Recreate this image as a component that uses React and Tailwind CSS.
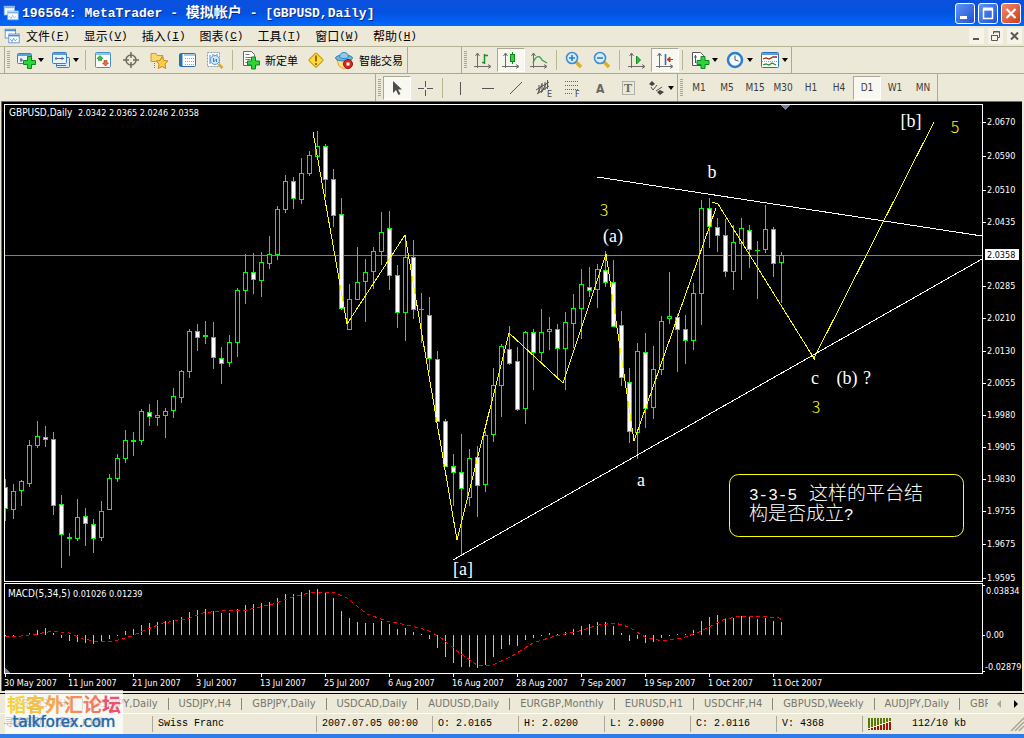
import React from 'react'

// [high, open/close top, open/close bottom, low, filled]
const CANDLES = [
  [479, 487, 509, 521, 1], [484, 491, 510, 519, 0], [480, 481, 491, 506, 0], [440, 445, 484, 487, 0],
  [421, 436, 446, 448, 0], [426, 437, 440, 447, 1], [432, 439, 506, 515, 1], [495, 504, 535, 568, 1],
  [533, 537, 539, 556, 0], [499, 517, 539, 541, 0], [508, 516, 524, 546, 1], [519, 524, 539, 553, 1],
  [501, 511, 538, 541, 0], [474, 478, 510, 510, 0], [454, 458, 479, 482, 0], [430, 440, 459, 463, 0],
  [432, 440, 442, 456, 0], [409, 411, 441, 445, 0], [404, 412, 417, 426, 1], [400, 415, 418, 426, 0],
  [408, 411, 416, 438, 0], [388, 396, 411, 418, 0], [370, 371, 398, 403, 0], [329, 331, 372, 378, 0],
  [324, 331, 338, 351, 1], [321, 335, 337, 344, 0], [322, 337, 358, 369, 1], [347, 358, 364, 384, 1],
  [335, 342, 363, 367, 0], [288, 290, 343, 357, 0], [254, 272, 291, 304, 0], [253, 272, 280, 294, 1],
  [252, 262, 281, 297, 0], [236, 254, 264, 269, 0], [206, 209, 255, 260, 0], [175, 181, 210, 213, 0],
  [177, 181, 199, 209, 1], [158, 173, 200, 204, 0], [151, 155, 174, 176, 0], [131, 146, 157, 159, 0],
  [144, 146, 180, 197, 1], [169, 179, 216, 227, 1], [198, 214, 309, 310, 1], [284, 299, 330, 330, 0],
  [247, 282, 300, 300, 0], [259, 272, 282, 322, 0], [247, 251, 272, 289, 0], [212, 232, 252, 265, 0],
  [211, 228, 276, 290, 1], [265, 275, 313, 328, 1], [235, 257, 313, 341, 0], [240, 257, 310, 319, 1],
  [293, 309, 310, 343, 0], [297, 315, 359, 372, 1], [351, 359, 422, 422, 1], [419, 421, 467, 467, 1],
  [454, 466, 473, 506, 1], [434, 472, 489, 555, 1], [449, 458, 498, 506, 0], [446, 457, 486, 517, 1],
  [431, 435, 485, 492, 0], [368, 385, 435, 442, 0], [344, 346, 386, 417, 0], [326, 349, 364, 365, 1],
  [347, 361, 410, 411, 1], [331, 332, 409, 424, 0], [329, 332, 353, 390, 1], [309, 332, 353, 361, 0],
  [317, 329, 332, 350, 0], [324, 329, 349, 378, 1], [312, 322, 349, 390, 0], [294, 308, 324, 348, 0],
  [269, 284, 309, 339, 0], [267, 287, 291, 297, 1], [264, 269, 290, 308, 0], [251, 270, 283, 287, 1],
  [260, 282, 327, 327, 1], [311, 325, 378, 386, 1], [368, 382, 432, 443, 1], [343, 351, 433, 459, 0],
  [333, 352, 409, 428, 1], [346, 369, 408, 419, 0], [316, 321, 370, 375, 0], [272, 316, 319, 324, 0],
  [314, 317, 330, 372, 1], [315, 329, 341, 364, 1], [283, 293, 341, 350, 0], [200, 208, 294, 325, 0],
  [198, 208, 227, 248, 1], [218, 227, 236, 252, 1], [219, 235, 272, 277, 1], [225, 242, 272, 290, 0],
  [218, 228, 244, 280, 0], [225, 230, 250, 268, 1], [241, 250, 251, 299, 0], [205, 229, 250, 253, 0],
  [227, 229, 264, 277, 1], [252, 255, 263, 303, 0],
]

const MACD = [
  637, 636, 636, 633, 630, 628, 633, 638, 641, 642, 643, 644, 642, 639, 635, 631, 629, 625, 623, 622,
  621, 620, 617, 612, 610, 609, 611, 613, 613, 609, 605, 604, 603, 602, 598, 594, 594, 592, 590, 589,
  593, 598, 611, 618, 622, 623, 623, 621, 624, 629, 628, 632, 634, 639, 648, 657, 663, 667, 667, 668,
  665, 657, 649, 645, 646, 640, 638, 636, 633, 634, 632, 629, 626, 624, 622, 622, 626, 633, 641, 639,
  643, 642, 638, 636, 634, 634, 630, 621, 617, 615, 618, 618, 616, 617, 619, 618, 621, 622,
]

const SIGNAL =
  '5,636 21,636 37,634 53,631 69,633 83,639 100,642 115,641 132,636 143,631 163,623 187,619 203,613 227,610 247,610 273,604 293,597 313,592 333,592 347,598 367,614 387,621 407,625 427,630 440,637 457,651 477,665 493,665 510,657 517,653 533,643 555,636 579,631 599,625 615,623 629,627 645,637 662,641 682,638 699,632 725,619 742,616 759,616 779,618 782,620'

const PRICES = [
  [122, '2.0670'], [156, '2.0590'], [190, '2.0510'], [222, '2.0435'], [286, '2.0285'], [318, '2.0210'],
  [351, '2.0130'], [383, '2.0055'], [415, '1.9980'], [447, '1.9905'], [479, '1.9830'], [511, '1.9755'],
  [544, '1.9675'], [578, '1.9595'],
]

const DATES = [
  '30 May 2007', '11 Jun 2007', '21 Jun 2007', '3 Jul 2007', '13 Jul 2007', '25 Jul 2007', '6 Aug 2007',
  '16 Aug 2007', '28 Aug 2007', '7 Sep 2007', '19 Sep 2007', '1 Oct 2007', '11 Oct 2007',
]

const MENUS = [
  ['文件', 'F'], ['显示', 'V'], ['插入', 'I'], ['图表', 'C'], ['工具', 'T'], ['窗口', 'W'], ['帮助', 'H'],
]

const TABS = [
  'GBPUSD,H1', 'USDJPY,Daily', 'USDJPY,H4', 'GBPJPY,Daily', 'USDCAD,Daily', 'AUDUSD,Daily',
  'EURGBP,Monthly', 'EURUSD,H1', 'USDCHF,H4', 'GBPUSD,Weekly', 'AUDJPY,Daily',
]

const Svg = ({ children, size = 'h-5 w-5' }) => (
  <svg viewBox="0 0 20 20" className={`shrink-0 ${size}`} fill="none" aria-hidden="true">
    {children}
  </svg>
)

const Plus = ({ x, y }) => (
  <path
    transform={`translate(${x} ${y})`}
    d="M4 0h4v4h4v4H8v4H4V8H0V4h4z"
    fill="#2fd43b"
    stroke="#0a8a1c"
  />
)

const Axes = () => (
  <path d="M4.500 4v14M1 16.500h16M2.500 6l2-3 2 3M15 14.500l3 2-3 2" stroke="#6b6b6b" />
)

const Windows = ({ color = '#4a8ad4' }) => (
  <>
    <rect x="1.500" y="1.500" width="13" height="11" fill="#fff" stroke={color} />
    <path d="M1 3h14" stroke={color} strokeWidth="2" />
    <rect x="6" y="7.500" width="13" height="11" fill="#fff" stroke={color} />
    <path d="M6 9.500h13" stroke={color} strokeWidth="2" />
    <path d="M8 14l2 3 2-4 2 3 2-2" stroke={color} />
  </>
)

const icons = {
  newChart: (
    <Svg>
      <rect x="1.500" y="3.500" width="14" height="10" rx="1" fill="#eaf4ff" stroke="#3b7fc4" />
      <path d="M2 5h13" stroke="#5aa0e0" strokeWidth="2" />
      <path d="M4 10h3M5 8v4" stroke="#557" />
      <Plus x={7.5} y={6.5} />
    </Svg>
  ),
  profiles: (
    <Svg>
      <rect x="5.500" y="7.500" width="13" height="10" rx="1" fill="#dcecfb" stroke="#3b7fc4" />
      <rect x="1.500" y="2.500" width="14" height="11" rx="1" fill="#eaf4ff" stroke="#3b7fc4" />
      <path d="M2 4h13" stroke="#5aa0e0" strokeWidth="2" />
      <path d="M4 8.500h9M5 7v3M11 7v3M5 15.500h10" stroke="#668" />
    </Svg>
  ),
  marketWatch: (
    <Svg>
      <rect x="2.500" y="2.500" width="15" height="15" rx="1" fill="#fff" stroke="#4a90c8" />
      <path d="M3 4h14" stroke="#8cc4ea" strokeWidth="2" />
      <path d="M7 5.500l3 3H8.500v2h-3v-2H4z" fill="#2cc23a" stroke="#138a20" strokeWidth=".6" />
      <path d="M12.500 16l-3-3h1.500v-2.500h3V13h1.500z" fill="#f4653f" stroke="#b52c12" strokeWidth=".6" />
    </Svg>
  ),
  crosshairWindow: (
    <Svg>
      <circle cx="10" cy="10" r="5" stroke="#6c6c60" strokeWidth="1.500" />
      <path d="M10 2v6M10 12v6M2 10h6M12 10h6" stroke="#6c6c60" strokeWidth="1.500" />
    </Svg>
  ),
  navigator: (
    <Svg>
      <path d="M2 3.500h5l1 2h6v6H2z" fill="#fbd774" stroke="#cf9a2a" />
      <path d="M5.500 13v5" stroke="#777" strokeDasharray="1 1" />
      <path d="M13 6.500l2 4 4 .5-3 3 .8 4.500-3.800-2-3.800 2 .8-4.500-3-3 4-.5z" fill="#ffcb4a" stroke="#c98a1a" />
    </Svg>
  ),
  terminal: (
    <Svg>
      <rect x="2.500" y="3.500" width="16" height="13" rx="1" fill="#fff" stroke="#2f6fb8" />
      <path d="M4 4v12" stroke="#2f6fb8" strokeWidth="3" />
      <path d="M7 5h11" stroke="#9acbf0" strokeWidth="2" />
      <path d="M8 8.500h9M8 11.500h9M8 14.500h9" stroke="#9aa" strokeDasharray="1 1" />
    </Svg>
  ),
  tester: (
    <Svg>
      <rect x="2.500" y="2.500" width="12" height="14" fill="#fff" stroke="#999" strokeDasharray="2 1" />
      <path d="M5 5v9M8 4v3M12 4v3" stroke="#4a8ad4" />
      <circle cx="10" cy="10" r="4.500" fill="#cfe8fb" stroke="#5a9fd6" />
      <path d="M8.500 8v4l3-3v3" stroke="#3b7fc4" />
      <path d="M13.500 14l4 4" stroke="#d9a52c" strokeWidth="2.500" />
    </Svg>
  ),
  newOrder: (
    <Svg>
      <path d="M3.500 1.500h8l3 3v11h-11z" fill="#fff" stroke="#666" />
      <path d="M5.500 4.500h4M5.500 7.500h7M5.500 9.500h5M5.500 12.500h3" stroke="#777" />
      <Plus x={7.5} y={7} />
    </Svg>
  ),
  alert: (
    <Svg>
      <rect x="4.800" y="4.800" width="10.500" height="10.500" rx="1" transform="rotate(45 10 10)" fill="#ffd83a" stroke="#c39a12" />
      <path d="M10 5.500v6M10 13v2" stroke="#7a5a00" strokeWidth="1.600" />
    </Svg>
  ),
  expert: (
    <Svg>
      <path d="M3 10l2 6 5 3 6-3 1-6z" fill="#ffdf80" stroke="#d6a536" />
      <ellipse cx="10" cy="8" rx="8.500" ry="3" fill="#6cb6e6" stroke="#2f7fb8" />
      <path d="M5.500 7c0-6 9-6 9 0-2 2-7 2-9 0z" fill="#8fccf2" stroke="#2f7fb8" />
      <circle cx="14" cy="14" r="4.500" fill="#d8281a" stroke="#951208" />
      <rect x="12.500" y="12.500" width="3" height="3" fill="#fff" />
    </Svg>
  ),
  bars: (
    <Svg>
      <Axes />
      <path d="M11.500 4v10M9 12.500h2M12 5.500h3" stroke="#1d8f2a" strokeWidth="1.500" />
    </Svg>
  ),
  candles: (
    <Svg>
      <Axes />
      <path d="M11.500 2v12" stroke="#138a20" />
      <rect x="9.500" y="4.500" width="4" height="7" fill="#2fd43b" stroke="#138a20" />
    </Svg>
  ),
  line: (
    <Svg>
      <Axes />
      <path d="M4 13c3-8 7-8 9-3l5 3" stroke="#3aa046" strokeWidth="1.300" />
    </Svg>
  ),
  zoomIn: (
    <Svg>
      <path d="M12 12l5 5" stroke="#d9b02c" strokeWidth="3.500" />
      <circle cx="8" cy="8" r="5.500" fill="#d5ecfb" stroke="#3d8fce" strokeWidth="1.600" />
      <path d="M5 8h6M8 5v6" stroke="#2f7fc0" strokeWidth="1.600" />
    </Svg>
  ),
  zoomOut: (
    <Svg>
      <path d="M12 12l5 5" stroke="#d9b02c" strokeWidth="3.500" />
      <circle cx="8" cy="8" r="5.500" fill="#d5ecfb" stroke="#3d8fce" strokeWidth="1.600" />
      <path d="M5 8h6" stroke="#2f7fc0" strokeWidth="1.600" />
    </Svg>
  ),
  autoScroll: (
    <Svg>
      <Axes />
      <path d="M9.500 6l4 4-4 4z" fill="#2cc23a" stroke="#138a20" />
    </Svg>
  ),
  chartShift: (
    <Svg>
      <Axes />
      <path d="M10.500 4v11" stroke="#2f6fb8" strokeWidth="1.600" />
      <path d="M12 9.500h6M15 7l-3 2.500 3 2.500z" stroke="#c23a12" fill="#c23a12" />
    </Svg>
  ),
  indicators: (
    <Svg>
      <path d="M2.500 2.500h8l3 3v10h-11z" fill="#fff" stroke="#555" />
      <path d="M5.500 5v8M4 7h3" stroke="#555" />
      <Plus x={7} y={6.5} />
    </Svg>
  ),
  periods: (
    <Svg>
      <circle cx="10" cy="10" r="7" fill="#f4f9ff" stroke="#2c7fd0" strokeWidth="2.500" />
      <path d="M10 5.500V10l3.500 1" stroke="#555" />
    </Svg>
  ),
  templates: (
    <Svg>
      <rect x="1.500" y="2.500" width="17" height="15" rx="1" fill="#fff" stroke="#2f6fb8" />
      <path d="M2 4h16" stroke="#5aa0e0" strokeWidth="2" />
      <path d="M3 9l3-1 3 1 4-2h4" stroke="#a02818" strokeWidth="1.300" />
      <path d="M2 11.500h16" stroke="#7ab" strokeDasharray="1 1" />
      <path d="M3 15l3-1 3 1 3-2 4 2" stroke="#1d8f2a" strokeWidth="1.300" />
    </Svg>
  ),
  cursor: (
    <Svg>
      <path d="M6 3v12l3-3 2.500 5 2-1-2.500-4.500h4z" fill="#4c4c4c" />
    </Svg>
  ),
  cross: (
    <Svg>
      <path d="M10.500 3v6M10.500 12v6M3 10.500h6M12 10.500h6" stroke="#555" />
    </Svg>
  ),
  vline: <Svg><path d="M10.500 4v13" stroke="#555" /></Svg>,
  hline: <Svg><path d="M4 10.500h12" stroke="#555" /></Svg>,
  trend: <Svg><path d="M4 16L16 4" stroke="#555" /></Svg>,
  channel: (
    <Svg>
      <path d="M2 12L15 4M3 16l12-8M5 7v8M8 5v9M11 4v8M13.500 2v9M4 15l4-9M7 15l5-9" stroke="#555" />
      <text x="13" y="19" fontSize="8" fill="#444" fontFamily="DejaVu Sans">E</text>
    </Svg>
  ),
  fibo: (
    <Svg>
      <path d="M3 3.500h13M3 7.500h13M3 11.500h13M3 15.500h8" stroke="#666" strokeDasharray="1 1" />
      <text x="13" y="19" fontSize="8" fill="#444" fontFamily="DejaVu Sans">F</text>
    </Svg>
  ),
  text: (
    <Svg>
      <text x="6" y="15" fontSize="12" fontWeight="bold" fill="#666" fontFamily="DejaVu Sans Condensed">A</text>
    </Svg>
  ),
  label: (
    <Svg>
      <rect x="4.500" y="3.500" width="12" height="13" stroke="#777" strokeDasharray="1 1" />
      <text x="6" y="14" fontSize="12" fontWeight="bold" fill="#666" fontFamily="Liberation Serif">T</text>
    </Svg>
  ),
  arrows: (
    <Svg>
      <path d="M6 3l3 3-3 2-3-2zM14 12l4 2-4 3-3-3z" fill="#444" />
      <path d="M5 9l2 3 4-5M10 13l6-4" stroke="#555" />
    </Svg>
  ),
}

const ToolButton = ({ icon, label, text, pressed, drop }) => (
  <button
    type="button"
    aria-label={label}
    className={`flex h-6 shrink-0 items-center justify-center ${
      drop ? 'w-[35px]' : text ? 'px-1' : 'w-7'
    } ${pressed ? 'border border-t-[#aca899] border-l-[#aca899] border-r-white border-b-white bg-[#f8f7f0]' : ''}`}
  >
    {icons[icon]}
    {text && <span className="ml-[5px] text-[11px] leading-4">{text}</span>}
    {drop && (
      <svg viewBox="0 0 6 4" className="ml-0.5 h-1 w-1.5 shrink-0" aria-hidden="true">
        <path d="M0 0h6L3 4z" fill="#000" />
      </svg>
    )}
  </button>
)

const Grip = () => (
  <span className="flex w-[7px] shrink-0 items-center justify-center">
    <span className="h-[18px] w-[3px] bg-[repeating-linear-gradient(to_bottom,#a8a592_0_1px,transparent_1px_2px)]" />
  </span>
)

const Divider = () => <span className="mx-[3px] h-5 w-px shrink-0 bg-[#b9b78f]" />

const TitleBar = () => (
  <header className="flex h-[26px] items-center bg-linear-to-b from-[#0a50dc] via-[#0552e0] to-[#0068ff] pr-[3px] pl-[3px] text-white">
    <Svg size="h-4 w-4"><Windows color="#7ab4f0" /></Svg>
    <h1 className="ml-[3px] flex-1 truncate font-['Liberation_Mono','Noto_Sans_CJK_SC',monospace] text-[13px] font-bold whitespace-pre [text-shadow:1px_1px_#0a2a80]">
      196564: MetaTrader - <span className="text-sm">模拟帐户</span> - [GBPUSD,Daily]
    </h1>
    <div className="flex gap-[3px]">
      <button type="button" aria-label="Minimize" className="h-[21px] w-5 rounded-[3px] border border-white bg-linear-to-br from-[#5f94f4] to-[#1f4fd0]">
        <svg viewBox="0 0 18 19" aria-hidden="true"><path d="M4 13.500h7" stroke="#fff" strokeWidth="3" /></svg>
      </button>
      <button type="button" aria-label="Maximize" className="h-[21px] w-5 rounded-[3px] border border-white bg-linear-to-br from-[#5f94f4] to-[#1f4fd0]">
        <svg viewBox="0 0 18 19" aria-hidden="true"><path d="M4.500 5v9.500h9V5M4 5.500h10" fill="none" stroke="#fff" strokeWidth="1.500" /><path d="M4 5h10" stroke="#fff" strokeWidth="3" /></svg>
      </button>
      <button type="button" aria-label="Close" className="h-[21px] w-5 rounded-[3px] border border-white bg-linear-to-br from-[#f08a68] to-[#cc3a14]">
        <svg viewBox="0 0 18 19" aria-hidden="true"><path d="M4.500 5l9 9M13.500 5l-9 9" stroke="#fff" strokeWidth="2.200" /></svg>
      </button>
    </div>
  </header>
)

const MenuBar = () => (
  <nav className="flex h-[21px] items-center border-b border-[#b5b296] pl-1">
    <Svg size="h-4 w-4"><Windows /></Svg>
    {MENUS.map(([name, key], i) => (
      <button key={key} type="button" className={`flex h-full items-center text-xs whitespace-nowrap ${i ? 'px-[7px]' : 'pr-[7px] pl-[6px]'}`}>
        {name}
        <span className="font-['Liberation_Mono',monospace] text-[11px]">(<u>{key}</u>)</span>
      </button>
    ))}
    <div className="ml-auto flex gap-1 pr-0.5 text-[#5c5a50]">
      <button type="button" aria-label="Minimize chart" className="h-4 w-[15px] bg-[#f6f4ea]">
        <svg viewBox="0 0 15 16" aria-hidden="true"><path d="M4 11h6" stroke="currentColor" strokeWidth="2" /></svg>
      </button>
      <button type="button" aria-label="Restore chart" className="h-4 w-[15px] bg-[#f6f4ea]">
        <svg viewBox="0 0 15 16" fill="none" aria-hidden="true"><path d="M5.500 6V3.500h6v6H9.500M5 4h7M3 7.500h7M3.500 7v5.500h6V7" stroke="currentColor" /></svg>
      </button>
      <button type="button" aria-label="Close chart" className="h-4 w-[15px] bg-[#f6f4ea]">
        <svg viewBox="0 0 15 16" aria-hidden="true"><path d="M4 4.500l7 7M11 4.500l-7 7" stroke="currentColor" strokeWidth="2" /></svg>
      </button>
    </div>
  </nav>
)

const Toolbars = () => (
  <div className="overflow-hidden">
    <div className="flex h-[27px] border-b border-[#aca899] pl-1">
      <div className="flex items-center border-r border-l border-[#aca899]">
        <Grip />
        <ToolButton icon="newChart" label="New chart" drop />
        <ToolButton icon="profiles" label="Profiles" drop />
        <Divider />
        <ToolButton icon="marketWatch" label="Market watch" />
        <ToolButton icon="crosshairWindow" label="Data window" />
        <ToolButton icon="navigator" label="Navigator" />
        <ToolButton icon="terminal" label="Terminal" />
        <ToolButton icon="tester" label="Strategy tester" />
        <Divider />
        <ToolButton icon="newOrder" text="新定单" />
        <ToolButton icon="alert" label="MetaEditor" />
        <ToolButton icon="expert" text="智能交易" />
      </div>
      <div className="ml-[53px] flex items-center border-r border-l border-[#aca899]">
        <Grip />
        <ToolButton icon="bars" label="Bar chart" />
        <ToolButton icon="candles" label="Candlesticks" pressed />
        <ToolButton icon="line" label="Line chart" />
        <Divider />
        <ToolButton icon="zoomIn" label="Zoom in" />
        <ToolButton icon="zoomOut" label="Zoom out" />
        <Divider />
        <ToolButton icon="autoScroll" label="Auto scroll" />
        <ToolButton icon="chartShift" label="Chart shift" pressed />
        <Divider />
        <ToolButton icon="indicators" label="Indicators" drop />
        <ToolButton icon="periods" label="Periods" drop />
        <ToolButton icon="templates" label="Templates" drop />
      </div>
    </div>
    <div className="flex h-[27px] pl-[375px]">
      <div className="flex items-center border-l border-[#aca899]">
        <Grip />
        <ToolButton icon="cursor" label="Cursor" pressed />
        <ToolButton icon="cross" label="Crosshair" />
        <Divider />
        <ToolButton icon="vline" label="Vertical line" />
        <ToolButton icon="hline" label="Horizontal line" />
        <ToolButton icon="trend" label="Trendline" />
        <ToolButton icon="channel" label="Equidistant channel" />
        <ToolButton icon="fibo" label="Fibonacci" />
        <ToolButton icon="text" label="Text" />
        <ToolButton icon="label" label="Text label" />
        <ToolButton icon="arrows" label="Arrows" drop />
      </div>
      <div className="flex items-center border-r border-l border-[#aca899]">
        <Grip />
        {['M1', 'M5', 'M15', 'M30', 'H1', 'H4', 'D1', 'W1', 'MN'].map((tf) => (
          <button
            key={tf}
            type="button"
            className={`h-6 w-7 font-['DejaVu_Sans_Condensed',sans-serif] text-[10px] text-[#3c3c3c] ${
              tf === 'D1' ? 'border border-t-[#aca899] border-l-[#aca899] border-r-white border-b-white bg-[#f8f7f0]' : ''
            }`}
          >
            {tf}
          </button>
        ))}
      </div>
    </div>
  </div>
)

const Candle = ({ x, high, top, bottom, low, filled }) => (
  <g>
    <rect x={x} y={high} width="1" height={Math.max(low - high, 1)} fill="#00ff00" />
    <rect x={x - 2} y={top} width="5" height={bottom - top} fill="#00ff00" />
    {bottom - top > 2 && (
      <rect x={x - 1} y={top + 1} width="3" height={bottom - top - 2} fill={filled ? '#fff' : '#000'} />
    )}
  </g>
)

const Chart = () => (
  <svg
    viewBox="2 102 1020 589"
    className="block w-full bg-black font-['DejaVu_Sans_Condensed','DejaVu_Sans',sans-serif] text-[9px]"
    fill="#fff"
    role="img"
    aria-label="GBPUSD Daily"
  >
    <defs>
      <clipPath id="plot"><rect x="5" y="105" width="977" height="568" /></clipPath>
    </defs>

    <g clipPath="url(#plot)" shapeRendering="crispEdges">
      <path d="M5 255.500h977" stroke="#7480a0" />
      {CANDLES.map(([high, top, bottom, low, filled], i) => (
        <Candle key={i} x={5 + i * 8} high={high} top={top} bottom={bottom} low={low} filled={filled} />
      ))}
      <g fill="none" stroke="#ffff00">
        <path d="M313 132L347 324L405 235L457 540L509 333L563 383L606 254L634 441L716 208" />
        <path d="M712 202L718 204L815 360M812 355L814 358L934 122" />
      </g>
      <path d="M597 177L982 236M453 560L982 259" stroke="#fff" />
      {MACD.map((y, i) => (
        <rect key={i} x={5 + i * 8} y={Math.min(y, 635)} width="1" height={Math.max(Math.abs(y - 635), 1)} fill="#c0c0c0" />
      ))}
      <polyline points={SIGNAL} fill="none" stroke="#ff0000" strokeDasharray="4 3" />
      <path d="M780 105h11l-5.500 5zM5 668l5 5H5z" fill="#7480a0" />
    </g>

    <g stroke="#fff" fill="none" shapeRendering="crispEdges">
      <path d="M4.500 104.500H982.500V581.500H4.500zM4.500 583.500H982.500V673.500H4.500z" />
      {PRICES.map(([y]) => <path key={y} d={`M983 ${y}.5h3`} />)}
      {DATES.map((d, i) => <path key={d} d={`M${5 + i * 64}.5 674v3`} />)}
      <path d="M983 585.500h2M983 635.500h2M983 671.500h2" />
    </g>

    <text x="9" y="116"><tspan fontSize="10">GBPUSD,Daily</tspan><tspan x="78">2.0342 2.0365 2.0246 2.0358</tspan></text>
    <text x="8" y="597"><tspan fontSize="10">MACD(5,34,5)</tspan><tspan x="73">0.01026 0.01239</tspan></text>
    {PRICES.map(([y, p]) => <text key={p} x="987" y={y + 3}>{p}</text>)}
    <rect x="985" y="249" width="34" height="11" />
    <text x="987" y="258" fill="#000">2.0358</text>
    <text x="986" y="594">0.03834</text>
    <text x="986" y="638">0.00</text>
    <text x="985" y="670">-0.02879</text>
    {DATES.map((d, i) => <text key={d} x={4 + i * 64} y="686">{d}</text>)}

    <g fontFamily="Liberation Serif, serif" fontSize="18" textAnchor="middle">
      <text x="463" y="575">[a]</text>
      <text x="613" y="242">(a)</text>
      <text x="712" y="178">b</text>
      <text x="911" y="127">[b]</text>
      <text x="641" y="486">a</text>
      <text x="815" y="384">c</text>
      <text x="847" y="384">(b)</text>
      <text x="867" y="384">?</text>
    </g>
    <g fontFamily="Noto Sans CJK SC, sans-serif" fontWeight="300" fontSize="16" textAnchor="middle" fill="#ffff00">
      <text x="604" y="216">3</text>
      <text x="955" y="133">5</text>
      <text x="816" y="413">3</text>
    </g>

    <rect x="729.500" y="474.500" width="234" height="62" rx="9" fill="none" stroke="#ffff00" />
    <g fontFamily="Liberation Mono, Noto Sans CJK SC, sans-serif" fontWeight="300">
      <text x="749" y="500"><tspan fontSize="16">3-3-5 </tspan><tspan x="809" fontSize="19">这样的平台结</tspan></text>
      <text x="749" y="520"><tspan fontSize="19">构是否成立</tspan><tspan fontSize="16">?</tspan></text>
    </g>
  </svg>
)

const ChartTabs = () => (
  <div className="mt-0.5 flex h-[20px] items-center overflow-hidden border-t border-black pl-1 text-[#77756a]">
    <div className="flex min-w-0 flex-1 overflow-hidden font-['DejaVu_Sans_Condensed',sans-serif] text-[11px] leading-3">
      {TABS.map((tab) => (
        <button key={tab} type="button" className="shrink-0 border-r border-[#8a887c] px-[10px]">{tab}</button>
      ))}
      <button type="button" className="shrink-0 px-[10px]">GBPCHF</button>
    </div>
    <button type="button" aria-label="Scroll left" className="ml-1 w-4 text-[#aca899]">
      <svg viewBox="0 0 16 8" aria-hidden="true"><path d="M9 0v8L5 4z" fill="currentColor" /></svg>
    </button>
    <button type="button" aria-label="Scroll right" className="w-4 text-black">
      <svg viewBox="0 0 16 8" aria-hidden="true"><path d="M6 0v8l4-4z" fill="currentColor" /></svg>
    </button>
  </div>
)

const Cell = ({ className = '', children }) => (
  <span className={`shrink-0 border-l border-[#aca899] pl-[5px] whitespace-pre ${className}`}>{children}</span>
)

const StatusBar = () => (
  <footer className="flex h-[21px] items-center overflow-hidden border-t border-white font-['Liberation_Mono','Noto_Sans_CJK_SC',monospace] text-[10px] leading-4">
    <span className="min-w-0 flex-1 truncate pl-1">寻求帮助, 请按 F1键</span>
    <Cell className="w-[164px]">Swiss Franc</Cell>
    <Cell className="w-[116px]">2007.07.05 00:00</Cell>
    <Cell className="w-[86px]">O: 2.0165</Cell>
    <Cell className="w-[86px]">H: 2.0200</Cell>
    <Cell className="w-[86px]">L: 2.0090</Cell>
    <Cell className="w-[86px]">C: 2.0116</Cell>
    <Cell className="w-[86px]">V: 4368</Cell>
    <Cell className="flex w-[162px] items-center">
      <svg viewBox="0 0 24 12" className="mr-5 h-3 w-6" shapeRendering="crispEdges" aria-hidden="true">
        {[0, 1, 2, 3, 4, 5, 6, 7].map((n) => (
          <g key={n}>
            <rect x={n * 3} y="0" width="2" height={10 - n} fill="#5a7a00" />
            <rect x={n * 3} y={11 - n} width="2" height={n + 1} fill="#a01800" />
          </g>
        ))}
      </svg>
      112/10 kb
      <svg viewBox="0 0 14 14" className="ml-auto h-3.5 w-3.5" aria-hidden="true">
        <path d="M1 14L14 1M5 14l9-9M9 14l5-5" stroke="#a8a592" strokeWidth="1.500" />
      </svg>
    </Cell>
  </footer>
)

const Watermark = () => (
  <div className="pointer-events-none absolute bottom-1 left-[5px] flex h-11 w-[118px] flex-col items-center bg-white/70">
    <span className="flex pt-1 font-['Noto_Sans_CJK_SC',sans-serif] text-[19px] leading-5 font-bold">
      <span className="text-[#f5d23c]">韬</span>
      <span className="text-[#f5be46]">客</span>
      <span className="text-[#f5a550]">外</span>
      <span className="text-[#f58c5a]">汇</span>
      <span className="text-[#f57864]">论</span>
      <span className="text-[#f0506e]">坛</span>
    </span>
    <span className="font-['DejaVu_Sans',sans-serif] text-[15px] leading-4 text-[#2a69b0] [text-shadow:0_0_1px_#2a69b0]">talkforex.com</span>
  </div>
)

const App = () => {
  return (
    <div className="relative flex min-h-screen flex-col overflow-hidden bg-[#ece9d8] font-['Noto_Sans_CJK_SC',sans-serif] text-black">
      <TitleBar />
      <MenuBar />
      <Toolbars />
      <main className="mr-0.5 ml-px border-t border-l border-[#716f64]">
        <Chart />
      </main>
      <div className="relative">
        <ChartTabs />
        <StatusBar />
        <div className="h-1 bg-[#2f7ce8]" />
        <Watermark />
      </div>
    </div>
  )
}

export default App
